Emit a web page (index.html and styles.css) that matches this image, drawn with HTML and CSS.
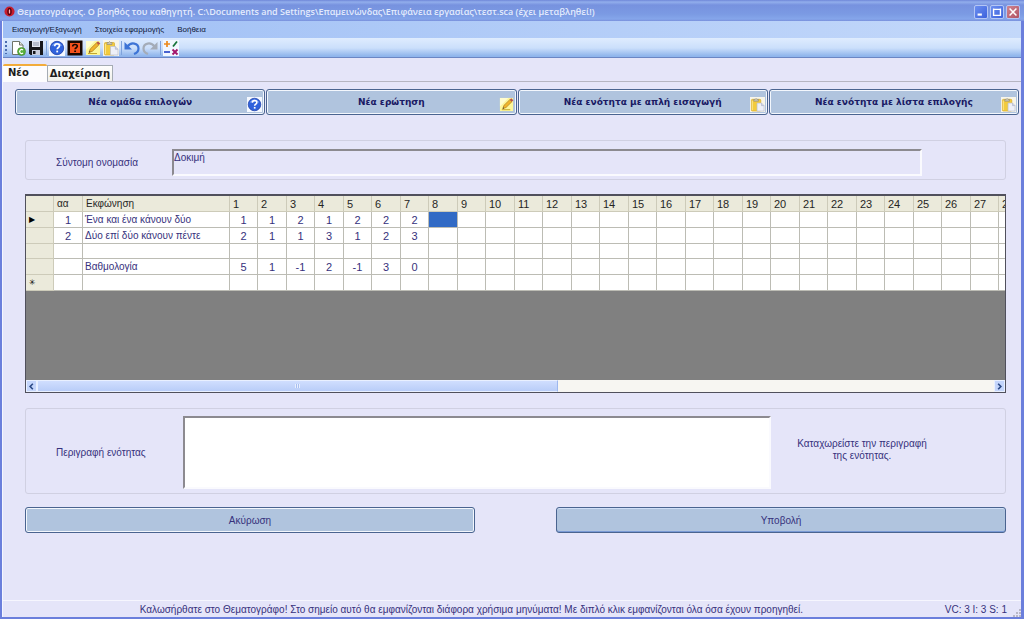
FILE: index.html
```html
<!DOCTYPE html>
<html lang="el">
<head>
<meta charset="utf-8">
<title>Θεματογράφος</title>
<link rel="stylesheet" href="styles.css">
</head>
<body>
<svg class="defs" aria-hidden="true">
  <symbol id="help" viewBox="0 0 16 16">
    <rect width="16" height="16" fill="#f4f8ff"/>
    <circle cx="8" cy="8" r="6.700" fill="#2f62dc" stroke="#1d3fa8" stroke-width=".8"/>
    <path d="M3 6a5.500 5.500 0 0 1 10 0q-5-2-10 0z" fill="#7ba2f4"/>
    <path d="M5.700 6.200c0-3.200 4.800-3.200 4.800-.4 0 1.700-2.300 1.700-2.300 3.500" fill="none" stroke="#fff" stroke-width="1.700"/>
    <rect x="7.300" y="10.600" width="1.800" height="1.800" fill="#fff"/>
  </symbol>
  <symbol id="note" viewBox="0 0 16 16">
    <path d="M1 1h14v14H1z" fill="#fdf79a"/>
    <path d="M1 1h9L1 10z" fill="#fffdd0"/>
    <path d="M4 12.500l1.200-3.500L11.500 2.800l2.300 2.200-6.300 6.200z" fill="#f0b52c" stroke="#a8761c" stroke-width=".7"/>
    <path d="M11.500 2.800l1.500-1.500 2.300 2.200-1.500 1.500z" fill="#b8544a"/>
    <path d="M4 12.500l.5-1.600 1 1z" fill="#333"/>
    <path d="M3 13.500h9" stroke="#c4a72e"/>
  </symbol>
  <symbol id="paste" viewBox="0 0 16 16">
    <rect width="16" height="16" fill="#f7f5ea"/>
    <rect x="1.500" y="2.500" width="10" height="12.500" rx="1" fill="#f3cb3d" stroke="#d6a92e" stroke-width=".7"/>
    <path d="M2.500 4v10" stroke="#fbe58c"/>
    <path d="M4 2.500h1.500q1-2 2 0H9v2H4z" fill="#c9c4b4" stroke="#8f8871" stroke-width=".6"/>
    <path d="M7.500 6.500h4.800l2.700 2.700V15H7.500z" fill="#eef0f8" stroke="#b9bed0" stroke-width=".7"/>
    <path d="M12.300 6.500v2.700H15" fill="#cdd3e6" stroke="#a9aec4" stroke-width=".6"/>
  </symbol>
</svg>
<div class="window">
  <header class="titlebar">
    <svg class="app-icon" viewBox="0 0 12 12" aria-hidden="true"><circle cx="6" cy="6" r="5.500" fill="#c81e2e"/><ellipse cx="6" cy="6" rx="1.800" ry="3.400" fill="none" stroke="#4a0610" stroke-width="1.200"/><path d="M6 4v4" stroke="#f6c6ca"/></svg>
    <h1 class="title">Θεματογράφος. Ο βοηθός του καθηγητή. C:\Documents and Settings\Επαμεινώνδας\Επιφάνεια εργασίας\τεστ.sca (έχει μεταβληθεί!)</h1>
    <button class="caption" aria-label="Ελαχιστοποίηση"><svg viewBox="0 0 14 14"><path d="M3 10h5" stroke="#fff" stroke-width="2.500"/></svg></button>
    <button class="caption" aria-label="Μεγιστοποίηση"><svg viewBox="0 0 14 14"><path d="M2.500 4h9M3 3v8h8V3" fill="none" stroke="#fff" stroke-width="1.600"/></svg></button>
    <button class="caption close" aria-label="Κλείσιμο"><svg viewBox="0 0 14 14"><path d="M3 3l8 8M11 3l-8 8" stroke="#fff" stroke-width="1.800"/></svg></button>
  </header>
  <div class="frame">
    <nav class="menubar">
      <button class="menu">Εισαγωγή/Εξαγωγή</button>
      <button class="menu">Στοιχεία εφαρμογής</button>
      <button class="menu">Βοήθεια</button>
    </nav>
    <div class="toolbar">
      <span class="grip"></span>
      <button class="tool" aria-label="Νέο"><svg viewBox="0 0 16 16"><path d="M2.500 1.500h7l3.500 3.500v9.500H2.500z" fill="#fff" stroke="#6f7469"/><path d="M9.500 1.500V5H13" fill="#dfe3dc" stroke="#6f7469"/><circle cx="11.500" cy="11.500" r="4" fill="#58b03c" stroke="#3a8727" stroke-width=".6"/><path d="M13 10a2 2 0 1 0 0 3" fill="none" stroke="#fff" stroke-width="1.200"/></svg></button>
      <button class="tool" aria-label="Αποθήκευση"><svg viewBox="0 0 16 16"><path d="M1 1h14v14H2.500L1 13.500z" fill="#17181c"/><path d="M4 1h8v6H4z" fill="#e4e8f2"/><path d="M5 3h6M5 5h6" stroke="#8b93a8"/><path d="M4 10h8v5H4z" fill="#c9cedd"/><path d="M5 11h2.500v3H5z" fill="#17181c"/></svg></button>
      <span class="divider"></span>
      <button class="tool" aria-label="Ομάδα επιλογών"><svg><use href="#help"/></svg></button>
      <button class="tool" aria-label="Ερωτήσεις"><svg viewBox="0 0 16 16"><path d="M.5.500h15v15H.5z" fill="#190800"/><path d="M3 3h10v10H3z" fill="#f4511c"/><path d="M5.700 6.500c0-2.600 4.600-2.600 4.600-.2 0 1.500-2.200 1.400-2.200 3" fill="none" stroke="#190800" stroke-width="1.600"/><path d="M7.200 10.400H9V12H7.200z" fill="#190800"/></svg></button>
      <button class="tool" aria-label="Ερώτηση"><svg><use href="#note"/></svg></button>
      <button class="tool" aria-label="Ενότητα"><svg><use href="#paste"/></svg></button>
      <span class="divider"></span>
      <button class="tool" aria-label="Αναίρεση"><svg viewBox="0 0 16 16"><path d="M.5 2v7.500H8z" fill="#3d74d6"/><path d="M3.500 6.500C7 1.500 14.500 3 14.500 8.500c0 2.500-1.800 4.500-4.500 5.500" fill="none" stroke="#3d74d6" stroke-width="2.200"/></svg></button>
      <button class="tool" aria-label="Επανάληψη"><svg viewBox="0 0 16 16"><path d="M15.500 2v7.500H8z" fill="#a4acb8"/><path d="M12.500 6.500C9 1.500 1.500 3 1.500 8.500c0 2.500 1.800 4.500 4.500 5.500" fill="none" stroke="#a4acb8" stroke-width="2.200"/></svg></button>
      <span class="divider"></span>
      <button class="tool" aria-label="Βαθμολογία"><svg viewBox="0 0 16 16"><path d="M0 0h16v16H0z" fill="#f1f7ff"/><path d="M1 4h6M4 1v6" stroke="#eb8a1e" stroke-width="1.700"/><path d="M10 6.500l4-5" stroke="#16733a" stroke-width="1.800"/><path d="M1 12h6" stroke="#2b48c8" stroke-width="1.700"/><path d="M9.500 9.500l5 5M14.500 9.500l-5 5" stroke="#a3166c" stroke-width="1.900"/></svg></button>
    </div>
    <div class="tabs" role="tablist">
      <button class="tab active" role="tab" aria-selected="true">Νέο</button>
      <button class="tab" role="tab" aria-selected="false">Διαχείριση</button>
    </div>
    <main class="page">
      <div class="actions">
        <button class="btn action">Νέα ομάδα επιλογών<svg><use href="#help"/></svg></button>
        <button class="btn action">Νέα ερώτηση<svg><use href="#note"/></svg></button>
        <button class="btn action">Νέα ενότητα με απλή εισαγωγή<svg><use href="#paste"/></svg></button>
        <button class="btn action">Νέα ενότητα με λίστα επιλογής<svg><use href="#paste"/></svg></button>
      </div>
      <form class="editor" onsubmit="return false">
        <div class="group name-group">
          <label for="name">Σύντομη ονομασία</label>
          <textarea id="name" class="field name" rows="1">Δοκιμή</textarea>
        </div>
        <div class="grid">
          <div class="grid-view">
            <table class="sheet">
              <colgroup id="cols"><col class="c-head"><col class="c-num"><col class="c-text"></colgroup>
              <thead><tr id="head"><th></th><th>αα</th><th>Εκφώνηση</th></tr></thead>
              <tbody id="rows"></tbody>
            </table>
          </div>
          <div class="scrollbar">
            <button class="arrow" type="button" aria-label="Αριστερά"><svg viewBox="0 0 10 10"><path d="M6.500 2l-3 3 3 3" fill="none" stroke="#2c4a86" stroke-width="1.800"/></svg></button>
            <div class="track"><div class="thumb"><i></i></div></div>
            <button class="arrow" type="button" aria-label="Δεξιά"><svg viewBox="0 0 10 10"><path d="M3.500 2l3 3-3 3" fill="none" stroke="#2c4a86" stroke-width="1.800"/></svg></button>
          </div>
        </div>
        <div class="group desc-group">
          <label for="desc">Περιγραφή ενότητας</label>
          <textarea id="desc" class="field desc"></textarea>
          <p class="hint">Καταχωρείστε την περιγραφή της ενότητας.</p>
        </div>
        <div class="submit">
          <button class="btn" type="button">Ακύρωση</button>
          <button class="btn default" type="submit">Υποβολή</button>
        </div>
      </form>
    </main>
    <footer class="status">
      <span class="message">Καλωσήρθατε στο Θεματογράφο! Στο σημείο αυτό θα εμφανίζονται διάφορα χρήσιμα μηνύματα! Με διπλό κλικ εμφανίζονται όλα όσα έχουν προηγηθεί.</span>
      <span>VC: 3 I: 3 S: 1</span>
      <svg class="size-grip" viewBox="0 0 9 9" aria-hidden="true"><path d="M7 1h2v2H7zM4 4h2v2H4zM7 4h2v2H7zM1 7h2v2H1zM4 7h2v2H4zM7 7h2v2H7z" fill="#b9b8c6"/></svg>
    </footer>
  </div>
</div>
<script src="sheet.js"></script>
</body>
</html>
```
FILE: sheet.js
```js
const COLUMNS = 28;
const rows = [
  { mark: '▶', num: 1, text: 'Ένα και ένα κάνουν δύο', values: [1, 1, 2, 1, 2, 2, 2], selected: 7 },
  { num: 2, text: 'Δύο επί δύο κάνουν πέντε', values: [2, 1, 1, 3, 1, 2, 3] },
  { values: [] },
  { text: 'Βαθμολογία', values: [5, 1, -1, 2, -1, 3, 0] },
  { mark: '✳', values: [] },
];

const cols = document.getElementById('cols');
const head = document.getElementById('head');
for (let i = 0; i < COLUMNS; i++) {
  const col = document.createElement('col');
  col.className = i % 2 ? 'c-odd' : 'c-even';
  cols.append(col);
  const th = document.createElement('th');
  th.className = 'number';
  th.textContent = i + 1;
  head.append(th);
}

const body = document.getElementById('rows');
for (const row of rows) {
  const tr = document.createElement('tr');
  const mark = document.createElement('th');
  mark.textContent = row.mark ?? '';
  tr.append(mark);
  const cells = [row.num, row.text, ...Array.from({ length: COLUMNS }, (_, i) => row.values[i])];
  cells.forEach((value, i) => {
    const td = document.createElement('td');
    td.textContent = value ?? '';
    td.className = i === 1 ? 'text' : 'number';
    if (i - 2 === row.selected) td.classList.add('selected');
    tr.append(td);
  });
  body.append(tr);
}
```
FILE: styles.css
```css
* { box-sizing: border-box; }
body {
  margin: 0;
  font: 10px/13px "Liberation Sans", Arial, sans-serif;
  color: #36317c;
}
button, textarea { font: inherit; color: inherit; margin: 0; }
button { padding: 0; border: 0; background: none; }
svg { display: block; }
.defs { display: none; }

.window {
  min-height: 100vh;
  display: flex;
  flex-direction: column;
  background: #6b7fdc;
}
.titlebar {
  height: 21px;
  display: flex;
  align-items: center;
  gap: 2px;
  padding: 2px 4px 0 4px;
  background: linear-gradient(#6f87d8, #92aeec 2px, #7792df 5px, #7b9ae3 14px, #85a6ea 19px, #7a90dc);
}
.app-icon { width: 11px; height: 11px; flex: none; }
.title {
  flex: 1;
  margin: 0;
  font: 600 9px/14px "Open Sans", sans-serif;
  color: #e4ecfd;
  white-space: nowrap;
  overflow: hidden;
}
.caption {
  width: 14px;
  height: 14px;
  border: 1px solid #b4c6f5;
  border-radius: 2px;
  background: linear-gradient(135deg, #6c8ff0, #3c62dc);
}
.caption.close { background: linear-gradient(135deg, #cf8591, #b05364); }

.frame {
  flex: 1;
  display: flex;
  flex-direction: column;
  margin: 0 3px 2px 2px;
  border-left: 1px solid #f4f6ff;
  background: #e5e5f9;
}
.menubar {
  height: 17px;
  display: flex;
  align-items: center;
  gap: 13px;
  padding-left: 9px;
  background: linear-gradient(90deg, #9fbff5, #c3d8fa);
}
.menu { font: 8px/14px "Liberation Sans", Arial, sans-serif; color: #101838; }
.toolbar {
  height: 20px;
  display: flex;
  align-items: center;
  gap: 2px;
  padding-left: 2px;
  background: linear-gradient(#dfecfe, #cbdffb 10px, #8fb5ec 18px);
  border-bottom: 1px solid #6b86c4;
}
.grip {
  width: 2px;
  height: 13px;
  margin-right: 1px;
  background: repeating-linear-gradient(#4c6cae 0 2px, transparent 2px 4px);
}
.tool svg { width: 16px; height: 16px; }
.divider { width: 1px; height: 14px; background: #7fa3dc; }

.tabs {
  height: 24px;
  display: flex;
  align-items: flex-end;
  border-bottom: 1px solid #b5b5c2;
}
.tab {
  height: 16px;
  padding: 0 2px;
  border: 1px solid #a5acb4;
  border-bottom: 0;
  background: linear-gradient(#fefefd, #f0f0ea);
  font: bold 10px/14px "DejaVu Sans", sans-serif;
  color: #1c1c20;
}
.tab.active {
  height: 18px;
  padding: 0 18px 2px 5px;
  margin-bottom: -1px;
  border: 0;
  border-top: 2px solid #f2ac3c;
  border-radius: 2px 2px 0 0;
  background: #fcfcfe;
}

.page { flex: 1; padding: 7px 2px 0 12px; }
.actions {
  display: grid;
  grid-template-columns: repeat(4, 1fr);
  gap: 1px;
}
.btn {
  height: 26px;
  border: 1px solid #4a6490;
  border-radius: 3px;
  background: #b0c4de;
  box-shadow: inset 0 0 0 1px #f3f7fd;
}
.action {
  position: relative;
  font: bold 9px/14px "DejaVu Sans", sans-serif;
  color: #1a1a64;
}
.action svg {
  position: absolute;
  right: 2px;
  bottom: 2px;
  width: 15px;
  height: 15px;
}
.btn.default { box-shadow: inset 0 1px #cfdff8, inset 0 -1px #7a9ad6; }

.editor { padding: 25px 13px 0 10px; }
.group {
  display: grid;
  border: 1px solid #d0d0e2;
  border-radius: 3px;
}
.name-group {
  grid-template-columns: 116px 1fr;
  align-items: center;
  min-height: 40px;
  padding: 4px 83px 0 30px;
}
.field {
  display: block;
  width: 100%;
  padding: 0;
  border: 2px solid;
  border-color: #8c8a90 #fafafe #fafafe #8c8a90;
  resize: none;
  outline: 0;
  overflow: hidden;
}
.name { height: 27px; background: #e5e5f9; }

.grid {
  margin-top: 14px;
  border: 1px solid #50505c;
  border-top-width: 2px;
  background: #808080;
}
.grid-view { height: 184px; overflow: hidden; }
.sheet {
  table-layout: fixed;
  width: 1000px;
  border-collapse: separate;
  border-spacing: 0;
  background: #fff;
}
.c-head { width: 28px; }
.c-num { width: 29px; }
.c-text { width: 147px; }
.c-even { width: 28px; }
.c-odd { width: 29px; }
.sheet th, .sheet td {
  height: 16px;
  padding: 0;
  line-height: 14px;
  border: solid #bcbcb4;
  border-width: 0 1px 1px 0;
  text-align: center;
  white-space: nowrap;
}
.sheet tbody tr:nth-child(3) > * { height: 15px; }
.sheet th {
  padding-left: 3px;
  background: #ebeadb;
  color: #26261f;
  font-weight: normal;
  text-align: left;
  border-color: #cdcbb9;
}
.sheet tbody th { font: 8px/12px "DejaVu Sans", sans-serif; color: #000; }
.sheet .number { font-size: 11px; }
.sheet .text { padding-left: 2px; text-align: left; }
.sheet .selected { background: #316ac5; }
.scrollbar {
  height: 12px;
  display: flex;
  background: #f7f6f2;
}
.arrow {
  width: 11px;
  background: #c4d5fb;
  border: 1px solid #e9f0ff;
}
.track { flex: 1; }
.thumb {
  width: 54.4%;
  height: 12px;
  display: grid;
  place-items: center;
  background: linear-gradient(#d0defe, #b9cdf8);
  border: 1px solid #e9f0ff;
  border-right-color: #9db7ee;
}
.thumb i { width: 5px; height: 4px; background: repeating-linear-gradient(90deg, #e8effe 0 1px, #a9bff0 1px 2px); }

.desc-group {
  grid-template-columns: 127px 1fr 184px;
  margin-top: 15px;
  min-height: 85px;
  padding: 7px 50px 4px 30px;
  align-items: center;
}
.desc { height: 73px; background: #fff; }
.hint { margin: 0 0 6px; padding: 0 24px 0 22px; line-height: 12px; text-align: center; }
.submit {
  display: grid;
  grid-template-columns: 1fr 1fr;
  gap: 81px;
  margin-top: 13px;
}
.status {
  height: 17px;
  display: flex;
  align-items: center;
  gap: 5px;
  border-top: 1px solid #f6f6fe;
}
.message { flex: 1; text-align: center; }
.size-grip { width: 9px; height: 9px; align-self: flex-end; }
```
